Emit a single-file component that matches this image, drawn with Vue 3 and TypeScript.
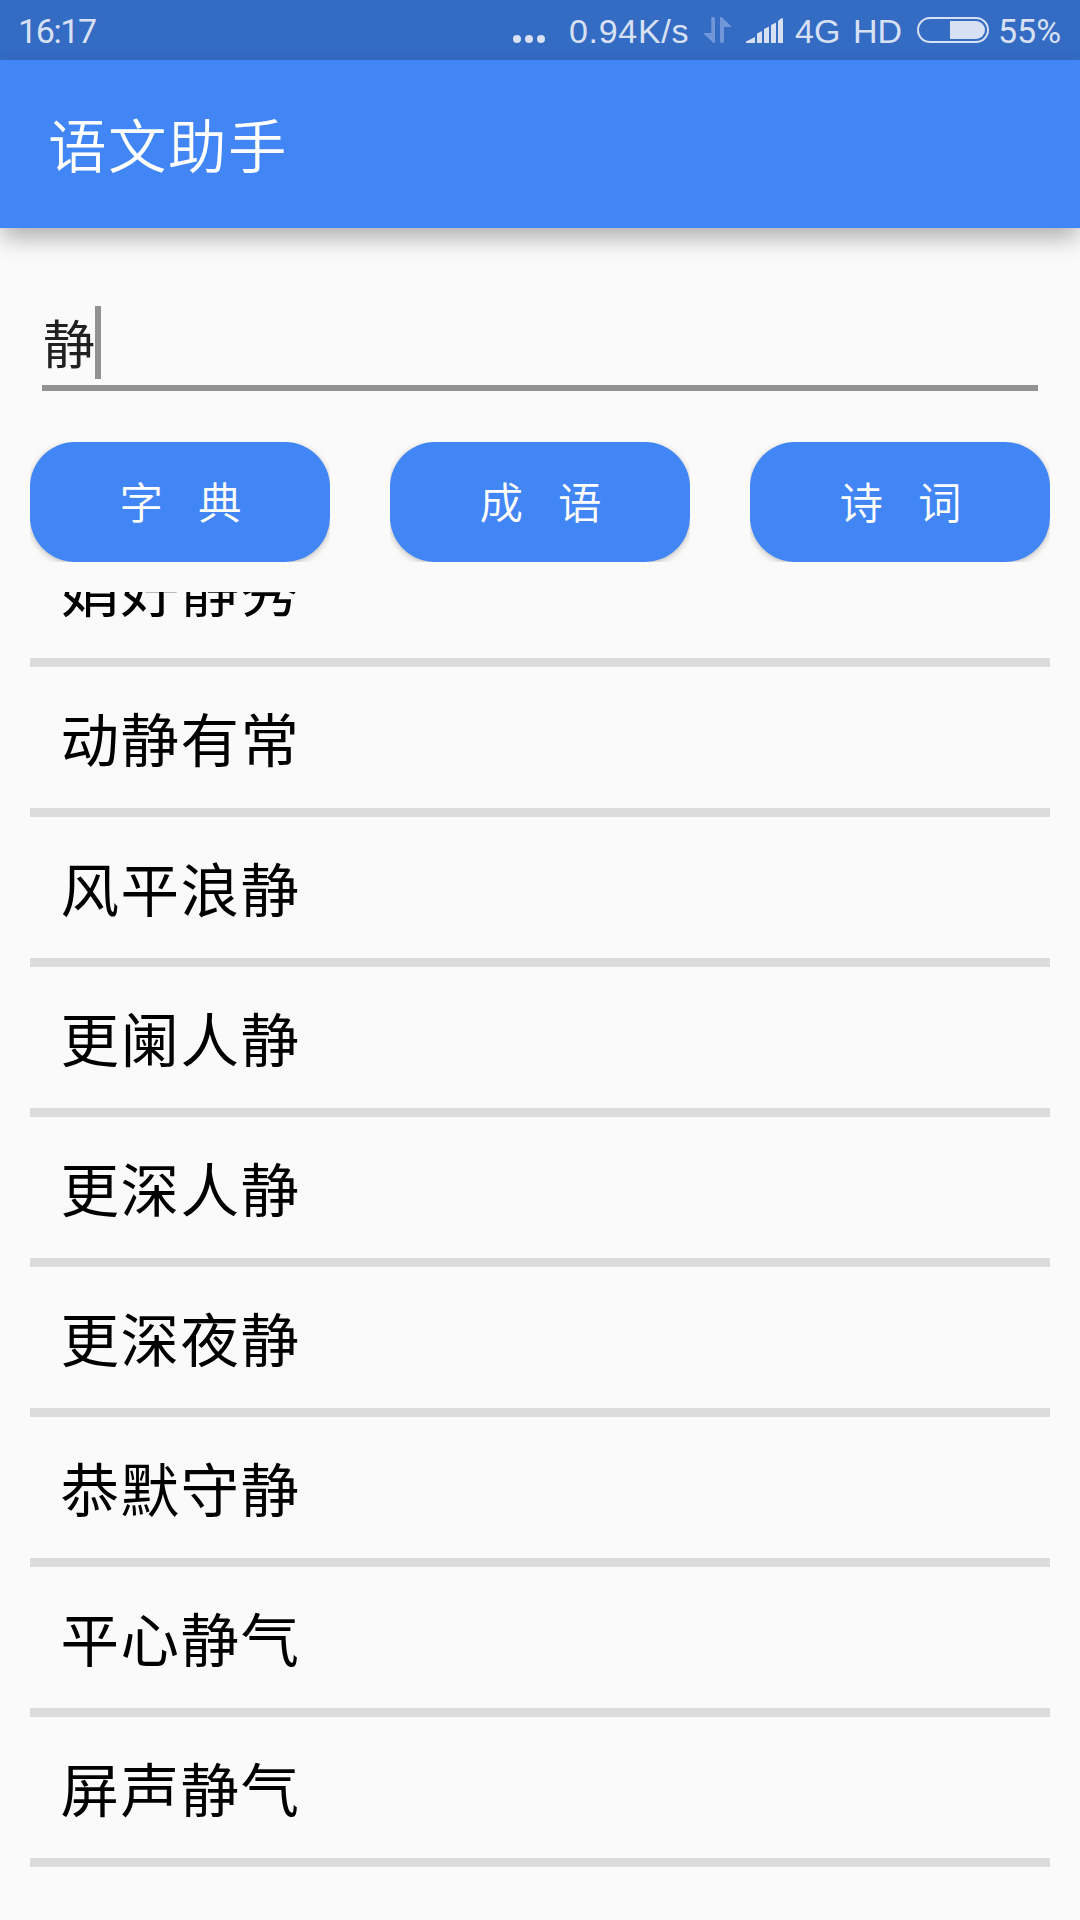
<script setup lang="ts">
import { ref } from 'vue'

const keyword = ref<string>('静')
const categories: string[] = ['字典', '成语', '诗词']
const idioms: string[] = [
  '娟好静秀',
  '动静有常',
  '风平浪静',
  '更阑人静',
  '更深人静',
  '更深夜静',
  '恭默守静',
  '平心静气',
  '屏声静气',
]
</script>

<template>
  <div class="screen">
    <header class="status">
      <span class="clock">16:17</span>
      <svg class="dots" width="32" height="8" viewBox="0 0 32 8">
        <circle cx="4" cy="4" r="4" /><circle cx="16" cy="4" r="4" /><circle cx="28" cy="4" r="4" />
      </svg>
      <span class="speed">0.94K/s</span>
      <svg class="arrows" width="27" height="26" viewBox="0 0 27 26">
        <path d="M7.3 0H9.3Q11 0 11 2V26H9.500L0 17V16H7.300V2Z" />
        <path d="M16 0H17.500L27 9V10H20V24Q20 26 18 26Q16 26 16 24Z" />
      </svg>
      <svg class="signal" width="37" height="25" viewBox="0 0 37 25">
        <path d="M0 25V23.500L9 19V25ZM11 25V15.500L16 13V25ZM18 25V11L23 8.500V25ZM25 25V7L30 4.500V25ZM32 25V3L35 .5Q37 -.3 37 1V25Z" />
      </svg>
      <span class="network">4G</span>
      <span class="hd">HD</span>
      <svg class="battery" width="72" height="26" viewBox="0 0 72 26">
        <rect class="shell" x="1" y="1" width="70" height="24" rx="12" />
        <path d="M33 4H59A9 9 0 0 1 59 22H33Z" />
      </svg>
      <span class="percent">55%</span>
    </header>

    <div class="appbar"><h1>语文助手</h1></div>

    <main>
      <div class="field">
        <span class="value">{{ keyword }}</span><i class="caret"></i>
      </div>

      <div class="buttons">
        <div v-for="name in categories" :key="name" class="slot">
          <button type="button">
            <span v-for="ch in name" :key="ch">{{ ch }}</span>
          </button>
        </div>
      </div>

      <div class="results">
        <ul>
          <li v-for="item in idioms" :key="item">{{ item }}</li>
        </ul>
      </div>
    </main>
  </div>
</template>

<style>
body {
  background: #fafafa;
}
</style>

<style scoped>
.screen {
  display: flex;
  flex-direction: column;
  width: 1080px;
  height: 1920px;
  overflow: hidden;
  background: #fafafa;
  font-family: "Noto Sans CJK SC", sans-serif;
}

.status {
  display: flex;
  align-items: flex-start;
  box-sizing: border-box;
  flex: none;
  height: 60px;
  padding-left: 18px;
  background: #346bc3;
  color: #d8e1f3;
  font-family: Roboto, "Liberation Sans", sans-serif;
  font-size: 34px;
  line-height: 62px;
  white-space: nowrap;
}
.status svg {
  flex: none;
  fill: #d8e1f3;
}
.status span {
  flex: none;
}
.clock {
  width: 495px;
  letter-spacing: -1.4px;
}
.dots {
  margin-top: 35px;
}
.speed {
  width: 118px;
  margin-left: 24px;
  font-family: "Liberation Sans", sans-serif;
  letter-spacing: 0.7px;
}
.status .arrows {
  margin: 17px 0 0 17px;
  fill: #7197d9;
}
.signal {
  margin: 18px 0 0 15px;
}
.network {
  width: 46px;
  margin-left: 12px;
  font-family: "Liberation Sans", sans-serif;
}
.hd {
  width: 48px;
  margin-left: 12px;
  font-family: "Liberation Sans", sans-serif;
}
.battery {
  margin: 17px 0 0 16px;
}
.status .shell {
  fill: none;
  stroke: #d8e1f3;
  stroke-width: 2;
}
.percent {
  margin-left: 9px;
}

.appbar {
  display: flex;
  align-items: center;
  box-sizing: border-box;
  flex: none;
  height: 168px;
  padding: 0 0 2px 48px;
  background: #4286f5;
  box-shadow: 0 12px 22px -2px rgba(0, 0, 0, 0.3);
}
h1 {
  margin: 0;
  color: #fff;
  font-size: 58.5px;
  font-weight: 350;
  letter-spacing: 1.5px;
  line-height: 80px;
}

main {
  display: flex;
  flex-direction: column;
  flex: 1;
  min-height: 0;
  padding: 78px 30px 0;
}
.field {
  display: flex;
  flex: none;
  height: 79px;
  margin: 0 12px;
  border-bottom: 6px solid #929292;
}
.value {
  width: 53px;
  color: #212121;
  font-size: 52px;
  line-height: 72px;
  text-indent: 1px;
}
.caret {
  width: 6px;
  height: 73px;
  background: #929292;
}

.buttons {
  display: flex;
  flex: none;
  justify-content: space-between;
  margin-top: 51px;
}
.slot {
  width: 300px;
  height: 120px;
  overflow: hidden;
}
button {
  display: flex;
  align-items: center;
  justify-content: center;
  gap: 35px;
  width: 100%;
  height: 100%;
  padding: 0 0 2px 1px;
  border: 0;
  border-radius: 45px;
  background: #4286f5;
  box-shadow: 0 2px 6px rgba(0, 0, 0, 0.24);
  color: #fff;
  font-family: inherit;
  font-size: 43.5px;
  font-weight: 350;
  line-height: 60px;
}

.results {
  display: flex;
  flex-direction: column;
  justify-content: flex-end;
  flex: none;
  height: 1275px;
  margin-top: 30px;
  overflow: hidden;
}
ul {
  margin: 0;
  padding: 0;
  list-style: none;
}
li {
  height: 141px;
  padding-left: 30.5px;
  border-bottom: 9px solid #dcdcdc;
  color: #000;
  font-size: 58.5px;
  letter-spacing: 1.5px;
  line-height: 140px;
}
</style>
